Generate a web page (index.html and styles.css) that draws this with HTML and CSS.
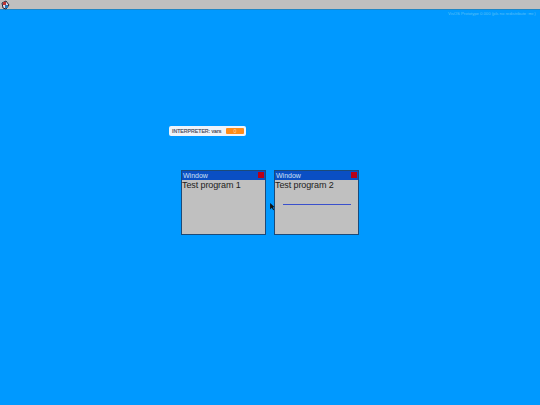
FILE: index.html
```html
<!DOCTYPE html>
<html>
<head>
<meta charset="utf-8">
<title>VisOS</title>
<link rel="stylesheet" href="styles.css">
</head>
<body>
<header class="topbar">
<svg class="logo" viewBox="0 0 10 10" width="10" height="10"><path d="M2 3 L6 1 L9 5 L6 9 L3 8 Z" fill="#dde" stroke="#223" stroke-width="1"/><rect x="3" y="2" width="3" height="3" fill="#b33"/><rect x="5" y="5" width="3" height="3" fill="#27b"/></svg>
</header>
<div class="notice">VisOS Prototype 0.000 (pls no redistribute :mr.)</div>
<div class="status"><span class="status-label">INTERPRETER: vars</span><span class="status-value">0</span></div>
<svg class="cursor" viewBox="0 0 6 10" width="5" height="8"><path d="M0 0 L0 8 L2 6 L4 9 L5 8 L3.500 5.500 L5.500 5 Z" fill="#111"/></svg>
<main class="windows">
<section class="window">
<div class="titlebar"><span>Window</span><i class="close"></i></div>
<div class="content">Test program 1</div>
</section>
<section class="window">
<div class="titlebar"><span>Window</span><i class="close"></i></div>
<div class="content">Test program 2<div class="line"></div></div>
</section>
</main>
</body>
</html>
```
FILE: styles.css
```css
html, body { margin: 0; height: 100%; overflow: hidden; }
body { background: #0099ff; font-family: "Liberation Sans", Arial, sans-serif; position: relative; }
.topbar { height: 9px; background: #bfbfbf; border-bottom: 1px solid #1f86c4; }
.logo { position: absolute; left: 0; top: 0; }
.notice { position: absolute; left: 448px; top: 10px; font-size: 4.200px; line-height: 7px; color: #5cc0f8; white-space: nowrap; }
.status { position: absolute; left: 169px; top: 126px; width: 77px; height: 10px; box-sizing: border-box; padding-left: 3px; background: #eef3fa; border-radius: 2px; display: flex; align-items: center; font-size: 5.200px; color: #445; -webkit-text-stroke: 0.15px #445; }
.status-label { width: 54px; white-space: nowrap; }
.status-value { width: 18px; height: 6px; background: #ff8c1a; border-radius: 1px; color: #ffd9a8; text-align: center; line-height: 6px; -webkit-text-stroke: 0; }
.cursor { position: absolute; left: 270px; top: 203px; }
.windows { display: flex; gap: 8px; margin: 160px 0 0 181px; }
.window { width: 85px; height: 65px; box-sizing: border-box; border: 1px solid #1c4a78; background: #c0c0c0; }
.titlebar { height: 9px; background: #0a4fc4; color: #cfe0f5; font-size: 7px; line-height: 9px; padding-left: 1px; display: flex; justify-content: space-between; }
.close { width: 6px; height: 6px; margin: 1px 1px 0 0; background: #b80018; box-sizing: border-box; }
.content { font-size: 9px; line-height: 11px; color: #222; letter-spacing: -0.100px; }
.line { height: 1px; background: #3a50cc; margin: 13px 7px 0 8px; }
```
